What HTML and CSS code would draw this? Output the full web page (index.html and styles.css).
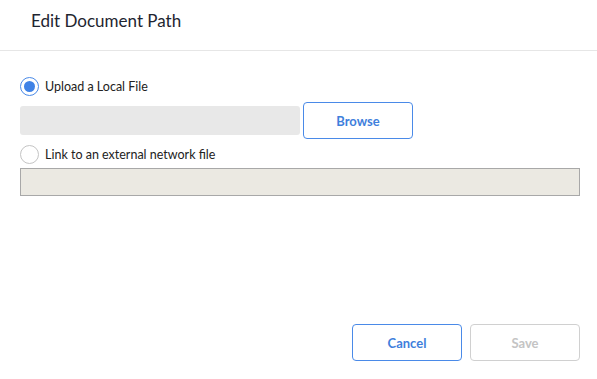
FILE: index.html
```html
<!DOCTYPE html>
<html>
<head>
<meta charset="utf-8">
<link rel="stylesheet" href="styles.css">
</head>
<body>
<div class="dialog">
  <div class="header"><h1 class="title">Edit Document Path</h1></div>
  <div class="body">
    <label class="option">
      <span class="radio checked"><span class="dot"></span></span>
      <span class="label">Upload a Local File</span>
    </label>
    <div class="upload-row">
      <div class="file-field"></div>
      <button class="btn primary browse">Browse</button>
    </div>
    <label class="option second">
      <span class="radio"></span>
      <span class="label">Link to an external network file</span>
    </label>
    <div class="link-field"></div>
  </div>
  <div class="footer">
    <button class="btn primary">Cancel</button>
    <button class="btn disabled">Save</button>
  </div>
</div>
</body>
</html>
```

FILE: styles.css
```css
html, body {
  margin: 0;
  padding: 0;
  background: #fff;
}
body {
  font-family: "Lato", "Open Sans", sans-serif;
  color: #222;
  width: 597px;
  height: 379px;
  overflow: hidden;
}
.dialog {
  display: flex;
  flex-direction: column;
  height: 379px;
}
.header {
  height: 51px;
  border-bottom: 1px solid #e6e6e6;
  box-sizing: border-box;
  padding: 9px 0 0 31px;
}
.title {
  margin: 0;
  font-size: 17px;
  font-weight: 400;
  color: #1e2530;
  line-height: 24px;
}
.body {
  padding: 25px 17px 0 20px;
  display: flex;
  flex-direction: column;
  flex: 1;
}
.option {
  display: flex;
  align-items: center;
  gap: 6px;
  height: 20px;
}
.radio {
  width: 19px;
  height: 19px;
  box-sizing: border-box;
  border-radius: 50%;
  border: 1px solid #c4c4c4;
  display: flex;
  align-items: center;
  justify-content: center;
  background: #fff;
}
.radio.checked {
  border: 1.5px solid #4a8ae8;
}
.dot {
  width: 11px;
  height: 11px;
  border-radius: 50%;
  background: #3f82e6;
}
.label {
  font-size: 12.5px;
  color: #222;
}
.upload-row {
  display: flex;
  align-items: center;
  gap: 3px;
  margin-top: 6px;
}
.file-field {
  width: 280px;
  height: 29px;
  background: #e8e8e8;
  border-radius: 3px;
}
.btn {
  width: 110px;
  height: 37px;
  box-sizing: border-box;
  border-radius: 4px;
  background: #fff;
  font-family: inherit;
  font-size: 13px;
  font-weight: 700;
  padding: 0;
}
.btn.primary {
  border: 1px solid #4a8ae8;
  color: #3f7fdc;
}
.btn.disabled {
  border: 1px solid #d0d0d0;
  color: #c4c4c4;
}
.option.second {
  margin-top: 5px;
}
.link-field {
  margin-top: 4px;
  height: 28px;
  box-sizing: border-box;
  background: #ebe9e2;
  border: 1px solid #a8a8a8;
}
.footer {
  display: flex;
  justify-content: flex-end;
  gap: 8px;
  padding: 0 17px 18px 0;
}
```
